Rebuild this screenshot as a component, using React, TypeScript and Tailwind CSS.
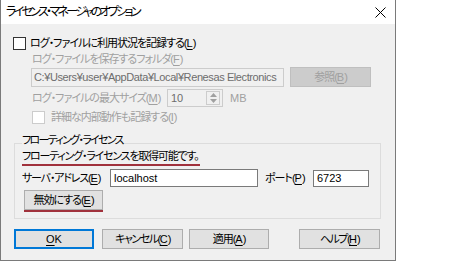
import React from "react";

// Windows-style dialog bits //
const Btn = ({
	label,
	hot,
	w = "w-[81px]",
	disabled = false,
}: {
	label: string;
	hot: string;
	w?: string;
	disabled?: boolean;
}) => {
	const cls = disabled
		? "bg-[#cccccc] border border-[#bfbfbf] text-[#a0a0a0]"
		: "bg-[#e1e1e1] border border-[#adadad] text-black";
	return (
		<div className={`${w} h-[20px] flex items-center justify-center leading-none ${cls}`}>
			<span>
				{label}(<Hot c={hot} />)
			</span>
		</div>
	);
};

const Box = ({ disabled = false }: { disabled?: boolean }) => (
	<div
		className={`w-[13px] h-[13px] shrink-0 border bg-white ${
			disabled ? "border-[#cccccc]" : "border-[#333333]"
		}`}
	/>
);

const Hot = ({ c }: { c: string }) => (
	<span className="underline underline-offset-2 tracking-normal">{c}</span>
);

const App = () => {
	return (
		<div className="w-[452px] h-[266px] bg-white text-[11px] whitespace-nowrap font-['Liberation_Sans','Noto_Sans_CJK_JP',sans-serif] [font-feature-settings:'palt'] tracking-[-1px] leading-[14px]">
			<div className="w-[396px] h-[261px] flex flex-col bg-[#f0f0f0] border-l border-r border-b border-[#7a7a7a]">
				{/* title bar */}
				<div className="h-[24px] shrink-0 bg-white flex items-center justify-between pl-[5px] pr-[9px]">
					<span className="text-black text-[12px] tracking-[-2.7px]">ライセンス・マネージャのオプション</span>
					<svg width="11" height="11" viewBox="0 0 11 11" className="text-black">
						<path d="M0.5 0.5 L10.5 10.5 M10.5 0.5 L0.5 10.5" stroke="currentColor" strokeWidth="1" />
					</svg>
				</div>

				{/* log section */}
				<div className="flex flex-col pl-[12px] pt-[12px]">
					<div className="h-[14px] flex items-center gap-[4px]">
						<Box />
						<span className="text-black">
							ログ・ファイルに利用状況を記録する(<Hot c="L" />)
						</span>
					</div>
					<div className="h-[14px] mt-[2px] pl-[19px] flex items-center text-[#a0a0a0]">
						ログ・ファイルを保存するフォルダ(<Hot c="F" />)
					</div>
					<div className="mt-[1px] pl-[18px] flex items-center gap-[6px]">
						<div className="w-[253px] h-[19px] border border-[#cccccc] bg-[#f0f0f0] flex items-center px-[2px] text-[#6d6d6d] tracking-[-0.4px] overflow-hidden">
							C:¥Users¥user¥AppData¥Local¥Renesas Electronics
						</div>
						<Btn label="参照" hot="B" disabled />
					</div>
					<div className="mt-[2px] pl-[19px] h-[18px] flex items-center text-[#a0a0a0]">
						<span className="w-[135px]">
							ログ・ファイルの最大サイズ(<Hot c="M" />)
						</span>
						<div className="w-[56px] h-[18px] border border-[#cccccc] flex items-center justify-between pl-[3px] pr-[2px] text-[#6d6d6d] tracking-normal">
							<span>10</span>
							<div className="w-[14px] h-[14px] border border-[#cccccc] flex flex-col items-center justify-center gap-[2px]">
								<svg width="7" height="4" viewBox="0 0 7 4">
									<path d="M0 4 L3.5 0 L7 4 Z" fill="#a0a0a0" />
								</svg>
								<svg width="7" height="4" viewBox="0 0 7 4">
									<path d="M0 0 L3.5 4 L7 0 Z" fill="#a0a0a0" />
								</svg>
							</div>
						</div>
						<span className="ml-[7px] tracking-normal">MB</span>
					</div>
					<div className="mt-[3px] pl-[19px] h-[14px] flex items-center gap-[6px] text-[#a0a0a0]">
						<Box disabled />
						<span>
							詳細な内部動作も記録する(<Hot c="I" />)
						</span>
					</div>
				</div>

				{/* floating license group */}
				<fieldset className="mt-[9px] ml-[13px] w-[367px] h-[86px] border border-[#dcdcdc] pl-[7px] pr-[8px]">
					<legend className="pb-[6px] leading-[14px] text-black tracking-[-1.7px]">フローティング・ライセンス</legend>
					<div className="-mt-[4px] w-fit pr-[2px] border-b-2 border-[#a0313c] text-black pb-[1px] tracking-[-1.2px]">
						フローティング・ライセンスを取得可能です。
					</div>
					<div className="mt-[3px] flex items-center h-[18px] text-black">
						<span className="w-[88px] tracking-[-1.2px]">
							サーバ・アドレス(<Hot c="E" />)
						</span>
						<div className="w-[148px] h-[18px] border border-[#7a7a7a] bg-white flex items-center px-[3px] tracking-normal">
							localhost
						</div>
						<span className="ml-[7px] w-[48px]">
							ポート(<Hot c="P" />)
						</span>
						<div className="w-[56px] h-[17px] border border-[#7a7a7a] bg-white flex items-center px-[3px] tracking-normal">
							6723
						</div>
					</div>
					<div className="mt-[3px] ml-[2px] w-fit border-b-2 border-[#a0313c]">
						<Btn label="無効にする" hot="E" w="w-[79px]" />
					</div>
				</fieldset>

				{/* dialog buttons */}
				<div className="mt-[10px] ml-[13px] flex items-center">
					<div className="w-[80px] h-[20px] bg-[#e1e1e1] border-2 border-[#0078d7] flex items-center justify-center leading-none tracking-normal">
						<span className="underline underline-offset-2">O</span>K
					</div>
					<div className="ml-[8px] tracking-[-1.5px]">
						<Btn label="キャンセル" hot="C" />
					</div>
					<div className="ml-[6px]">
						<Btn label="適用" hot="A" w="w-[80px]" />
					</div>
					<div className="ml-[30px] tracking-[-1.5px]">
						<Btn label="ヘルプ" hot="H" />
					</div>
				</div>
			</div>
		</div>
	);
};

export default App;
